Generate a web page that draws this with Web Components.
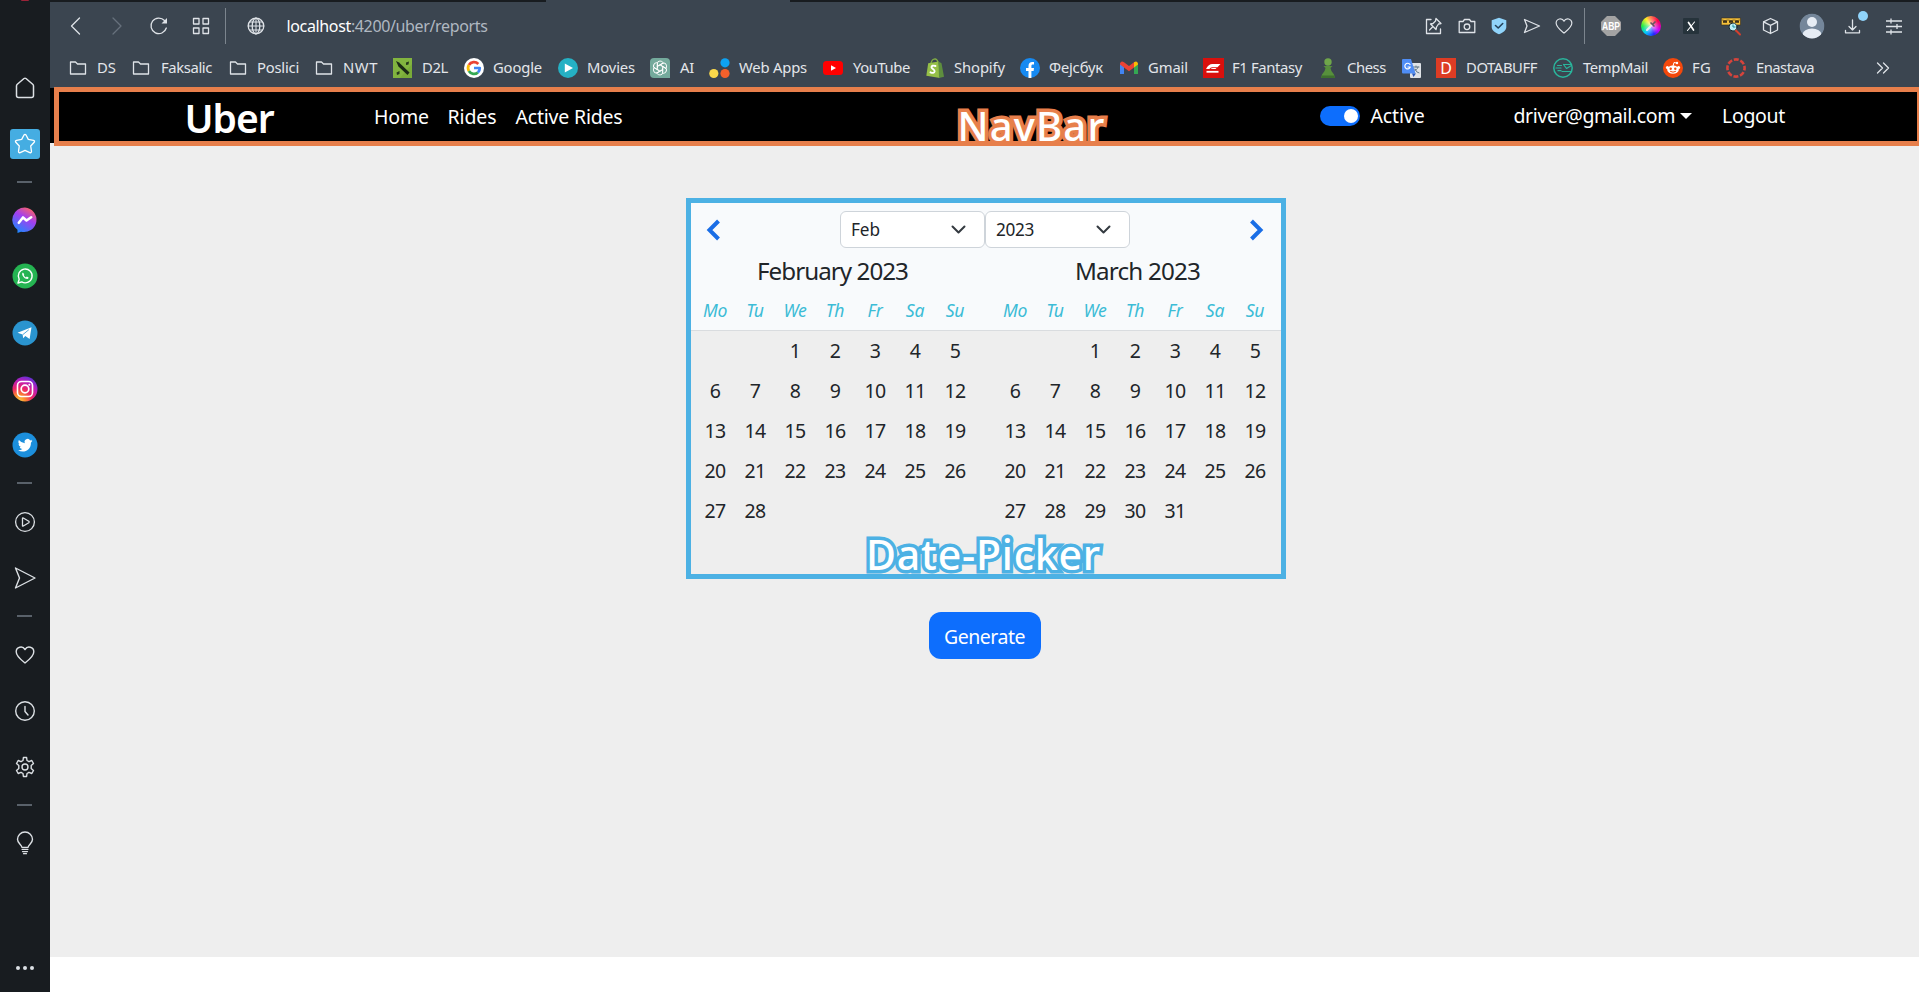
<!DOCTYPE html>
<html lang="en">
<head>
<meta charset="utf-8">
<title>Uber reports</title>
<style>
html,body{margin:0;height:100%;overflow:hidden;background:#fff}
body{font-family:"Noto Sans","Open Sans",sans-serif}
</style>
</head>
<body>
<browser-shell></browser-shell>
<script>
const svg=(w,h,body,vb)=>`<svg width="${w}" height="${h}" viewBox="${vb||`0 0 ${w} ${h}`}" fill="none" stroke-linecap="round" stroke-linejoin="round">${body}</svg>`;
const S='stroke="#dfe3e8" stroke-width="1.3"';

const heart='M10 18C7 15.5 1.2 11.5 1.2 6.8C1.2 2 7.6.2 10 4.6C12.400.2 18.800 2 18.800 6.800C18.800 11.500 13 15.500 10 18Z';
const ICONS={
 back:svg(20,20,`<path d="M13.500 2L5.500 10L13.500 18" ${S}/>`),
 fwd:svg(20,20,`<path d="M6 2L14 10L6 18" stroke="#66717c" stroke-width="1.300"/>`),
 reload:svg(20,20,`<path d="M17.300 12A7.800 7.800 0 1 1 15.500 4.500L17 6" ${S}/><path d="M18 2V7.500H12.500Z" fill="#dfe3e8"/>`),
 grid:svg(18,18,`<path d="M1.500 1.500h5.500v5.500h-5.500zM11 1.500h5.500v5.500H11zM1.500 11h5.500v5.500h-5.500zM11 11h5.500v5.500H11z" ${S}/>`),
 globe:svg(18,18,`<circle cx="9" cy="9" r="7.800" ${S}/><ellipse cx="9" cy="9" rx="3.800" ry="7.800" ${S}/><path d="M1.200 9h15.600M9 1.200v15.600M2.500 5h13M2.500 13h13" stroke="#dfe3e8" stroke-width="1"/>`),
 folder:svg(18,16,`<path d="M1.500 2h5l2 2h8v10H1.500Z" ${S}/>`),
 pin:svg(18,18,`<path d="M6 2.500H1.500V16.500H15.500V12" ${S}/><path d="M11 1.500L16 6.500L13.500 7L11.500 10L11 12.500L5.500 7L8 6.500L10.500 4ZM8 9.500L4.500 13" ${S}/>`),
 camera:svg(18,16,`<path d="M1.200 3.500H5L6.500 1.500H11.500L13 3.500H16.800V14.500H1.200Z" ${S}/><circle cx="9" cy="8.800" r="2.800" ${S}/>`),
 shield:svg(16,18,`<path d="M8 .8L15.300 3.300V10C15.300 13.500 11.500 16 8 17.300C4.500 16 .7 13.500 .7 10V3.300Z" fill="#90d4fb"/><path d="M4.500 8.500L7.200 11L11.700 6.500" stroke="#24435c" stroke-width="1.600"/>`),
 send:svg(18,18,`<path d="M1.500 2.500L16.500 9L1.500 15.500L4 9Z" ${S}/>`),
 heart:svg(18,17,`<path d="${heart}" ${S}/>`,'0 0 20 19'),
 abp:svg(20,20,`<path d="M6 0H14L20 6V14L14 20H6L0 14V6Z" fill="#a3a3a3"/><text x="10" y="13.800" text-anchor="middle" textLength="18" lengthAdjust="spacingAndGlyphs" font-size="10.500" font-weight="700" font-family="Liberation Sans,sans-serif" fill="#fff">ABP</text>`),
 wheel:`<i class="wheel">${svg(12,12,'<path d="M2 10L7 5" stroke="#eee" stroke-width="2"/><path d="M6 3L9 6M8 4L10 2" stroke="#6a5560" stroke-width="1.700"/>')}</i>`,
 xbox:svg(16,16,`<rect width="16" height="16" rx="1" fill="#26333b"/><path d="M5.500 4.500L10.500 12" stroke="#fff" stroke-width="1.700"/><path d="M11.500 4L4.500 12.500" stroke="#fff" stroke-width="1.100"/>`),
 www:svg(20,20,`<rect x=".5" y="2" width="19" height="7" fill="#f5c13b" stroke="#3a2d1a" stroke-width=".6"/><path d="M2 4l1 3 1-3 1 3 1-3M8 4l1 3 1-3 1 3 1-3M14 4l1 3 1-3 1 3 1-3" stroke="#2a2014" stroke-width=".9"/><circle cx="12" cy="11" r="4" fill="#bdeef5" stroke="#1c2a30"/><path d="M12 9v2h2" stroke="#178ba0"/><path d="M15 14.500L19 18.500" stroke="#d3402e" stroke-width="2"/>`),
 cube:svg(17,18,`<path d="M8.500 1.500L15.500 4.800V13L8.500 16.500L1.500 13V4.800ZM1.500 4.800L8.500 8.300L15.500 4.800M8.500 8.300V16.500" ${S}/>`),
 avatar:svg(26,26,`<defs><clipPath id="a"><circle cx="13" cy="13" r="12.500"/></clipPath></defs><g clip-path="url(#a)"><circle cx="13" cy="13" r="12.500" fill="#74869a"/><circle cx="13" cy="9" r="5" fill="#e6ecf4"/><ellipse cx="13" cy="21" rx="9.300" ry="5.400" fill="#e6ecf4"/></g>`),
 download:svg(26,26,`<path d="M8.500 7v10M5 13.500L8.500 17L12 13.500M1.500 17.500V19.800H15.500V17.500" ${S}/><circle cx="19" cy="3" r="5" fill="#90d4fb"/>`),
 sliders:svg(18,18,`<path d="M1 4h16M1 9.500h16M1 15h16M6 1.500v5M12 7v5M6 12.500v5" ${S} stroke-linecap="butt"/>`),
 more:svg(14,14,`<path d="M1.500 2L6.500 7L1.500 12M7.500 2L12.500 7L7.500 12" ${S}/>`),
 d2l:svg(19,20,`<rect width="19" height="20" fill="#79ab38"/><path d="M0 0H19V6L7 20H0Z" fill="#8bbd45" opacity=".5"/><path d="M3 3L6 4.500L16.500 14.500L14.500 17L5.500 8.500Z" fill="#1b2a16"/><path d="M16 3.500L13 4.500L13 7L15.500 6.500ZM6.500 13L3.500 14.500L4 17L6.500 16Z" fill="#26391c"/>`),
 google:svg(20,20,`<circle cx="10" cy="10" r="10" fill="#fff"/><g stroke-width="2.700" stroke-linecap="butt"><path d="M14.300 6A5.900 5.900 0 0 0 4.900 7" stroke="#ea4335"/><path d="M4.900 7A5.900 5.900 0 0 0 4.900 13" stroke="#fbbc05"/><path d="M4.900 13A5.900 5.900 0 0 0 13.900 14.400" stroke="#34a853"/><path d="M13.900 14.400A5.900 5.900 0 0 0 15.800 10H10" stroke="#4285f4"/></g>`),
 movies:svg(20,20,`<circle cx="10" cy="10" r="10" fill="#25b1c4"/><path d="M6.800 5.500V14.500L15 10Z" fill="#fff"/>`),
 ai:svg(20,20,`<path d="M4 0H16Q20 0 20 4V20H4Q0 20 0 16V4Q0 0 4 0Z" fill="#74aa9c"/><g stroke="#fff" stroke-width=".9">${[0,60,120,180,240,300].map(a=>`<path transform="rotate(${a} 10 10)" d="M7.300 11.600V5.700Q7.300 3 10 3Q12 3 13 4.500M8.700 7.700L13.200 5.100"/>`).join('')}</g>`),
 apps:svg(21,20,`<circle cx="16" cy="4.800" r="4.600" fill="#0da2f2"/><circle cx="4.800" cy="15.500" r="4.600" fill="#fbd94b"/><circle cx="16" cy="15.500" r="4.600" fill="#f4602b"/>`),
 yt:svg(20,20,`<rect y="3" width="20" height="14" rx="3.500" fill="#f00"/><path d="M8 7.200V12.800L13 10Z" fill="#fff"/>`),
 shopify:svg(18,20,`<path d="M5 5Q6 1 9 .8Q11 1 12 4" stroke="#83b043" stroke-width="1.200"/><path d="M2.200 5.200L12.500 3.500L14 19.900L.3 17.700Z" fill="#95bf47"/><path d="M12.500 3.500L15.500 5.200L18 18.800L13 20Z" fill="#5e8e3e"/><path d="M9.500 8Q5.500 6.800 5.500 9.300C5.500 11 9 11.300 8.600 13.500Q8 15.800 4.500 14.300" stroke="#fff" stroke-width="1.900"/>`),
 fb:svg(20,20,`<circle cx="10" cy="10" r="10" fill="#168af2"/><path d="M8.500 20V13H6V10H8.500V8C8.500 5.200 10 3.900 12.200 3.900L14 4.100V6.600H12.800C11.700 6.600 11.400 7.300 11.400 8V10H14L13.600 13H11.400V20Z" fill="#fff"/>`),
 gmail:svg(18,14,`<path d="M0 2V13H4V6Z" fill="#4285f4"/><path d="M18 2V13H14V6Z" fill="#34a853"/><path d="M0 2.500Q1-.5 4 1.200L9 5L14 1.200V6.500L9 10.200L4 6.500L0 3.500Z" fill="#ea4335"/><path d="M14 1.200Q17-.8 18 2.500V3.500L14 6.500Z" fill="#fbbc04"/>`),
 f1:svg(21,20,`<rect width="21" height="20" fill="#d9100d"/><path d="M3 11Q5.500 6 9.500 6H17.500L14.500 9.200H9Q7.500 9.200 6.300 11Z" fill="#fff"/><path d="M7.500 11Q8.500 9.900 10 9.900H13.500L12.500 11Z" fill="#fff"/><path d="M3.500 13.800H15.500" stroke="#fff" stroke-width="1.800" stroke-linecap="butt"/>`),
 chess:svg(14,20,`<circle cx="7" cy="4" r="3.700" fill="#6fa64a"/><path d="M2.500 8H11.500L9.500 10Q9.800 13.500 13 16.500L14 20H0L1 16.500Q4.200 13.500 4.500 10Z" fill="#57903c"/><path d="M0 20L1 17.500H13L14 20Z" fill="#3e702e"/>`),
 trans:svg(19,19,`<rect x="8" y="4" width="11" height="15" rx="1" fill="#dfe3e7"/><path d="M10.500 8H17M14 7V8M12 11Q15 12 16 8M13 10Q14.500 14 17 14" stroke="#617887"/><path d="M1 0H9L13.500 14.500H1Q0 14.500 0 13.500V1Q0 0 1 0Z" fill="#4f8df5"/><path d="M8 5.500A2.800 2.800 0 1 0 8.300 8H6" stroke="#fff" stroke-width="1.200"/><path d="M10 14.500H14L11.500 18Z" fill="#2758b8"/>`),
 dota:'<span class="dota">D</span>',
 temp:svg(20,20,`<circle cx="10" cy="10" r="9.200" stroke="#2ab59c" stroke-width="1.500"/><path d="M10.500 6.500H17.800M9 13.500H18M10.500 6.500L13.500 10.500L18.500 7.500M4.500 7.500H8.500M3 10H8M5 12.700H8" stroke="#2ab59c" stroke-width="1.200"/>`),
 reddit:svg(20,20,`<circle cx="10" cy="10" r="10" fill="#f4480c"/><ellipse cx="10" cy="11.700" rx="5.800" ry="4.100" fill="#fff"/><circle cx="4.400" cy="9.600" r="1.500" fill="#fff"/><circle cx="15.600" cy="9.600" r="1.500" fill="#fff"/><path d="M10 8L11 4.500L13.500 5" stroke="#fff"/><circle cx="14" cy="5" r="1.200" fill="#fff"/><circle cx="7.700" cy="10.800" r="1.200" fill="#f4480c"/><circle cx="12.300" cy="10.800" r="1.200" fill="#f4480c"/><path d="M7.500 13.500Q10 15 12.500 13.500" stroke="#f4480c"/>`),
 ena:svg(20,20,`<circle cx="10" cy="10" r="8.600" stroke="#d6443c" stroke-width="2.600" stroke-linecap="butt" stroke-dasharray="5 1.754" stroke-dashoffset="2.500"/>`),
 home:svg(20,22,`<path d="M1.500 9Q1.500 8 2.300 7.300L9 1.500Q10 .8 11 1.500L17.700 7.300Q18.500 8 18.500 9V18.500Q18.500 20.500 16.500 20.500H3.500Q1.500 20.500 1.500 18.500Z" stroke="#dce0e4" stroke-width="1.500"/>`),
 star:`<i class="star">${svg(22,22,'<path d="M10 2Q11 .7 12 2L14.300 6.400L19.500 7.300Q21.200 7.800 20.200 9.300L16.700 13L17.500 18.300Q17.500 20.200 15.800 19.600L11 17.400L6.200 19.600Q4.500 20.200 4.500 18.300L5.300 13L1.800 9.300Q.8 7.800 2.500 7.300L7.700 6.400Z" stroke="#fff" stroke-width="1.300"/>')}</i>`,
 msgr:svg(26,26,`<defs><linearGradient id="m" x1=".75" y1="0" x2=".2" y2="1"><stop stop-color="#ff6363"/><stop offset=".4" stop-color="#a23ff0"/><stop offset="1" stop-color="#168dff"/></linearGradient></defs><path d="M13 .5A12.500 12.300 0 1 1 9 24.700L5.500 26V22.800A12.500 12.300 0 0 1 13 .5Z" fill="url(#m)"/><path d="M6.800 15.800L11 10.500L14.500 13.500L19.200 10.300" stroke="#fff" stroke-width="2.600"/>`),
 whats:svg(26,26,`<circle cx="13" cy="13" r="12.500" fill="#25b452"/><path d="M6 20L7.200 16.300A6.900 6.900 0 1 1 9.800 18.900Z" stroke="#fff" stroke-width="1.400"/><path d="M10.800 9.500Q9.500 10.500 10.500 12.500Q12.500 16 15.500 16Q16.500 15.800 16.600 14.600L14.800 13.600L13.900 14.500Q12.500 14 11.700 12.100L12.300 11.200Z" fill="#fff"/>`),
 tele:svg(26,26,`<circle cx="13" cy="13" r="12.500" fill="#2a94cf"/><path d="M5.500 12.800L19.500 7.300L17.600 19L13.300 16L11.200 18.300L10.600 14.500Z" fill="#fff"/><path d="M11 14.500L16.500 10" stroke="#2a94cf" stroke-width=".8"/>`),
 insta:svg(26,26,`<defs><radialGradient id="g" cx=".25" cy="1" r="1.050"><stop stop-color="#ffd348"/><stop offset=".25" stop-color="#fb8a2e"/><stop offset=".52" stop-color="#ed2468"/><stop offset=".8" stop-color="#b91ebc"/><stop offset="1" stop-color="#6431d3"/></radialGradient></defs><circle cx="13" cy="13" r="12.500" fill="url(#g)"/><rect x="5.500" y="5.500" width="15" height="15" rx="4" stroke="#fff" stroke-width="1.600"/><circle cx="13" cy="13" r="3.800" stroke="#fff" stroke-width="1.700"/><circle cx="17.300" cy="8.700" r="1" fill="#fff"/>`),
 twit:svg(26,26,`<circle cx="13" cy="13" r="12.500" fill="#1c8fdc"/><path d="M20.500 8.800L18.800 9.300Q19.800 8.700 20 7.700L18.200 8.400A3 3 0 0 0 12.900 11.200Q9.300 11 6.900 8Q5.500 10.800 7.800 12.200L6.500 11.800Q6.500 14.200 8.900 14.900L7.600 15Q8.200 17 10.400 17.100Q8.500 18.500 6 18.300C11.500 21.500 19.200 18.600 18.900 10.800Z" fill="#fff"/>`),
 play:svg(22,22,`<circle cx="11" cy="11" r="9.400" stroke="#dce0e4" stroke-width="1.300"/><path d="M8.500 7.300Q8.500 6.500 9.300 7L14.800 10.300Q15.500 11 14.800 11.700L9.300 15Q8.500 15.500 8.500 14.700Z" stroke="#dce0e4" stroke-width="1.300"/>`),
 sidesend:svg(24,24,`<path d="M2.500 2L22 12L2.500 22L6.500 12Z" stroke="#dce0e4" stroke-width="1.400"/>`),
 sideheart:svg(20,19,`<path d="${heart}" stroke="#dce0e4" stroke-width="1.400"/>`),
 clock:svg(22,22,`<circle cx="11" cy="11" r="9.300" stroke="#dce0e4" stroke-width="1.400"/><path d="M11 6.500V11.500L14 15" stroke="#dce0e4" stroke-width="1.400"/>`),
 gear:svg(20,22,`<path d="M8 4.500L8.400 1.500H11.600L12 4.500L14 5.700L16.800 4.500L18.500 7.500L16.200 9.500V12.500L18.500 14.500L16.800 17.500L14 16.300L12 17.500L11.600 20.500H8.400L8 17.500L6 16.300L3.200 17.500L1.500 14.500L3.800 12.500V9.500L1.500 7.500L3.200 4.500L6 5.700Z" stroke="#dce0e4" stroke-width="1.400"/><circle cx="10" cy="11" r="3" stroke="#dce0e4" stroke-width="1.400"/>`),
 bulb:svg(18,24,`<path d="M6 16.500C5.500 13.500 1.500 12.500 1.500 8.300A7.500 7.300 0 0 1 16.500 8.300C16.500 12.500 12.500 13.500 12 16.500Z" stroke="#dce0e4" stroke-width="1.400"/><path d="M6 18.500h6M6.500 20.600h5M7.500 22.700h3" stroke="#dce0e4" stroke-width="1.200"/>`),
 dots:svg(20,6,`<circle cx="3" cy="3" r="2" fill="#dce0e4"/><circle cx="10" cy="3" r="2" fill="#dce0e4"/><circle cx="17" cy="3" r="2" fill="#dce0e4"/>`),
 dash:svg(15,2,`<path d="M0 1H15" stroke="#7e8894" stroke-width="1.300" stroke-linecap="butt"/>`)
};

/* Lays out its children as a flex row; every entry is [x, width, markup]. */
const flow=(items,start)=>{let e=start;return items.map(([x,w,h])=>{const m=x-e;e=x+w;return `<div class="c" style="margin-left:${m}px;width:${w}px">${h}</div>`}).join('')};
const rowCss='.c{flex:none;display:flex;align-items:center;justify-content:center}';
const ic=n=>`<ui-icon name="${n}"></ui-icon>`;
const tx=(t,w,s,extra='')=>`<fit-label w="${w}" style="font-size:${s}px;${extra}">${t}</fit-label>`;

class Base extends HTMLElement{
  constructor(){super();this.attachShadow({mode:'open'})}
  connectedCallback(){this.shadowRoot.innerHTML=this.render();this.ready?.()}
}
customElements.define('ui-icon',class extends Base{
  render(){return `<style>:host{display:flex;flex:none;line-height:0}svg{display:block;overflow:visible}
  .wheel{display:grid;place-items:center;width:20px;height:20px;border-radius:50%;background:radial-gradient(circle,#fff8 0 15%,transparent 60%),conic-gradient(#ff7a50,#f04 50deg,#c0f 120deg,#22f 160deg,#0cf 220deg,#2e4 270deg,#fe2 325deg,#ff7a50)}
  .star{display:grid;place-items:center;width:30px;height:30px;border-radius:3px;background:#45ade2}
  .dota{display:block;width:20px;height:20px;background:#dd3c24;color:#fff;text-align:center;font-size:16px;line-height:20px}</style>${ICONS[this.getAttribute('name')]}`}
});
/* One line of text whose tracking is adjusted to fill the width given in "w". */
customElements.define('fit-label',class extends Base{
  render(){return `<style>:host{display:block;flex:none;white-space:nowrap;line-height:1.4}span{display:inline-block}</style><span><slot></slot></span>`}
  ready(){const s=this.shadowRoot.querySelector('span'),w=+this.getAttribute('w');
    this.style.width=w+'px';
    const n=this.textContent.length,nat=s.getBoundingClientRect().width;
    s.style.letterSpacing=((w-nat)/n).toFixed(3)+'px';}
});
customElements.define('side-bar',class extends Base{
  render(){const it=(n,h=56)=>`<div style="height:${h}px">${ic(n)}</div>`;
  return `<style>:host{display:flex;flex-direction:column;background:#181c20;box-sizing:border-box;height:992px;padding-bottom:13px}
  div{display:flex;align-items:center;justify-content:center;flex:none;padding-right:1px}
  .top{height:60px;align-items:flex-start}.top i{width:8px;height:1px;background:#9b2338;border-radius:0 0 4px 4px}.sp{flex:1}</style>
  <div class="top"><i></i></div>${it('home')}${it('star')}${it('dash',20)}${it('msgr')}${it('whats')}${it('tele',57)}${it('insta',55)}${it('twit',57)}${it('dash',20)}${it('play',57)}${it('sidesend')}${it('dash',20)}${it('sideheart')}${it('clock',57)}${it('gear')}${it('dash',20)}${it('bulb')}<div class="sp"></div>${it('dots',22)}`}
});
customElements.define('tool-bar',class extends Base{
  render(){const sep='<b></b>';
  const items=[[66,20,ic('back')],[107,20,ic('fwd')],[149,20,ic('reload')],[192,18,ic('grid')],[225,1,sep],[247,18,ic('globe')],
   [286.500,201,tx('<span class="h">localhost</span>:4200/uber/reports',201,16,'color:#b0b8c1;line-height:22px;margin-top:1px')],
   [1425,18,ic('pin')],[1458,18,ic('camera')],[1491,16,ic('shield')],[1523,18,ic('send')],[1555,18,ic('heart')],[1584,1,sep],
   [1601,20,ic('abp')],[1641,20,ic('wheel')],[1683,16,ic('xbox')],[1721,20,ic('www')],[1762,17,ic('cube')],[1799,26,ic('avatar')],[1844,26,ic('download')],[1885,18,ic('sliders')]];
  return `<style>:host{display:flex;align-items:center;height:47px;padding-top:2px}${rowCss}.h{color:#fff}b{width:1px;height:36px;background:#7c858e}</style>${flow(items,50)}`}
});
customElements.define('bookmark-bar',class extends Base{
  render(){
  const B=[['folder',69,18,'DS',97,19],['folder',132,18,'Faksalic',161,51],['folder',229,18,'Poslici',257,42],['folder',315,18,'NWT',343,35],
  ['d2l',393,19,'D2L',422,26],['google',464,20,'Google',493,49],['movies',558,20,'Movies',587,48],['ai',650,20,'AI',680,14],['apps',709,21,'Web Apps',739,68],
  ['yt',823,20,'YouTube',853,57],['shopify',926,18,'Shopify',954,51],['fb',1020,20,'Фејсбук',1049,54],['gmail',1120,18,'Gmail',1148,40],['f1',1203,21,'F1 Fantasy',1232,70],
  ['chess',1321,14,'Chess',1347,39],['trans',1402,19],['dota',1436,20,'DOTABUFF',1466,71],['temp',1553,20,'TempMail',1583,65],['reddit',1663,20,'FG',1692,19],['ena',1726,20,'Enastava',1756,58],['more',1876,14]];
  const items=[];for(const [n,x,w,t,tX,tW] of B){items.push([x,w,ic(n)]);if(t)items.push([tX,tW,tx(t,tW,14.800)])}
  return `<style>:host{display:flex;align-items:center;height:38px;padding-bottom:1px;color:#e3e6ea}${rowCss}fit-label{line-height:20px;margin-top:-2px}</style>${flow(items,50)}`}
});
customElements.define('toggle-switch',class extends Base{
  render(){return `<style>:host{display:flex;box-sizing:border-box;width:40px;height:20px;border-radius:10px;background:#0d6efd;justify-content:flex-end;align-items:center;padding-right:2px}i{width:14px;height:14px;border-radius:50%;background:#fff}</style><i></i>`}
});
/* Outlined caption and coloured frame drawn over a page region. */
customElements.define('region-note',class extends Base{
  render(){return `<style>:host{display:block;position:absolute;box-sizing:border-box;border:5px solid var(--note);pointer-events:none;z-index:2}
  fit-label{position:absolute;color:#fff;font-weight:500;-webkit-text-stroke:7px var(--note);paint-order:stroke fill;line-height:54px}</style>
  <fit-label w="${this.getAttribute('w')}" style="font-size:${this.getAttribute('size')}px;left:${this.getAttribute('dx')}px;top:${this.getAttribute('dy')}px">${this.getAttribute('label')}</fit-label>`}
});
customElements.define('nav-bar',class extends Base{
  render(){const n='margin-top:2px';
  const items=[[184.500,89,tx('Uber',89,39,'font-weight:600;margin-top:4px;line-height:50px')],[374,55,tx('Home',55,19.500,n)],[447.500,49,tx('Rides',49,19.500,n)],[515.500,107,tx('Active Rides',107,19.500,n)],
  [1320,40,'<toggle-switch></toggle-switch>'],[1370.500,54,tx('Active',54,19.500)],[1513.500,161.500,tx('driver@gmail.com',161.500,19.500)],[1680,12,'<i></i>'],[1722,63,tx('Logout',63,19.500)]];
  return `<style>:host{display:flex;align-items:center;height:55px;background:#000;color:#fff;position:relative}${rowCss}
  i{border:6px solid transparent;border-top-color:#fff;border-bottom:0}
  region-note{--note:#e77f4b;left:3.500px;top:-1.500px;width:1868px;height:59px}</style>${flow(items,50)}<region-note label="NavBar" w="148" size="40" dx="899" dy="7"></region-note>`}
});
customElements.define('select-box',class extends Base{
  render(){return `<style>:host{display:flex;align-items:center;justify-content:space-between;box-sizing:border-box;width:145px;height:37px;border:1px solid #ced4da;border-radius:6px;background:#fff;padding:0 18px 0 10px;color:#212529}fit-label{margin-top:2px}</style>
  <fit-label w="${this.getAttribute('w')}" style="font-size:17.200px">${this.getAttribute('value')}</fit-label>${svg(15,9,'<path d="M1.500 1.500L7.500 7.500L13.500 1.500" stroke="#343a40" stroke-width="2"/>')}`}
});
customElements.define('month-grid',class extends Base{
  render(){const last=+this.getAttribute('days');
  const days=['',''];for(let i=1;i<=last;i++)days.push(i);
  return `<style>:host{display:block;width:280px;color:#212529}.t{display:flex;justify-content:center;height:40px;align-items:center;margin-left:var(--shift,0)}
  .g{display:grid;grid-template-columns:repeat(7,40px);grid-auto-rows:40px}.g>*{display:flex;align-items:center;justify-content:center}
  .w{grid-auto-rows:37px;font-style:italic;font-size:17.600px;letter-spacing:-.300px;color:#3cbcd6;padding-bottom:2px}.d{font-size:19.500px;letter-spacing:-.600px}</style>
  <div class="t">${tx(this.getAttribute('name'),this.getAttribute('w'),24.200)}</div>
  <div class="g w">${['Mo','Tu','We','Th','Fr','Sa','Su'].map(d=>`<span>${d}</span>`).join('')}</div>
  <div class="g d">${days.map(d=>`<span>${d}</span>`).join('')}</div>`}
});
customElements.define('date-picker',class extends Base{
  render(){return `<style>:host{display:block;box-sizing:border-box;position:relative;width:600px;height:381px;padding:5px}
  .wrap{height:371px;background:linear-gradient(#f8fafc 0 127px,#d9dcdf 127px 128px,#eee 128px)}
  .nav{display:flex;align-items:center;justify-content:space-between;box-sizing:border-box;height:52px;padding:1px 17px 0 15px}.sel{display:flex}
  .m{display:flex;gap:20px;padding-left:4px;margin-top:-4px}month-grid:first-child{--shift:-5px}month-grid:last-child{--shift:5px}
  region-note{--note:#4cb1e4;inset:0}</style>
  <div class="wrap"><div class="nav">${svg(14,22,'<path d="M12.500 2L3.500 11L12.500 20" stroke="#1a6ee6" stroke-width="4" stroke-linecap="butt" stroke-linejoin="miter"/>')}
  <div class="sel"><select-box value="Feb" w="29"></select-box><select-box value="2023" w="38"></select-box></div>
  ${svg(14,22,'<path d="M1.500 2L10.500 11L1.500 20" stroke="#1a6ee6" stroke-width="4" stroke-linecap="butt" stroke-linejoin="miter"/>')}</div>
  <div class="m"><month-grid name="February 2023" w="151" days="28"></month-grid><month-grid name="March 2023" w="125" days="31"></month-grid></div></div>
  <region-note label="Date-Picker" w="235" size="41" dx="175" dy="324"></region-note>`}
});
customElements.define('primary-button',class extends Base{
  render(){return `<style>:host{display:flex;align-items:center;justify-content:center;width:112px;height:47px;border-radius:12px;background:#0d6efd;color:#fff}fit-label{margin-top:3px}</style>${tx('Generate',81,19.500)}`}
});
customElements.define('browser-shell',class extends Base{
  render(){return `<style>:host{display:grid;grid-template-columns:50px 1fr;height:992px;overflow:hidden}
  .main{display:flex;flex-direction:column;min-width:0}
  .chrome{display:flex;flex-direction:column;box-sizing:border-box;height:88px;background:linear-gradient(90deg,#181c20 0 496px,#3b4550 496px 740px,#181c20 740px) top/100% 2px no-repeat #3b4550}
  .page{display:flex;flex-direction:column;align-items:center;box-sizing:border-box;height:814px;background:#eee;padding:55px 3px 0 0}
  primary-button{margin:33px 0 0 3px}date-picker{margin-left:6px}</style>
  <side-bar></side-bar><div class="main"><div class="chrome"><tool-bar></tool-bar><bookmark-bar></bookmark-bar></div><nav-bar></nav-bar>
  <div class="page"><date-picker></date-picker><primary-button></primary-button></div></div>`}
});
</script>
</body>
</html>
